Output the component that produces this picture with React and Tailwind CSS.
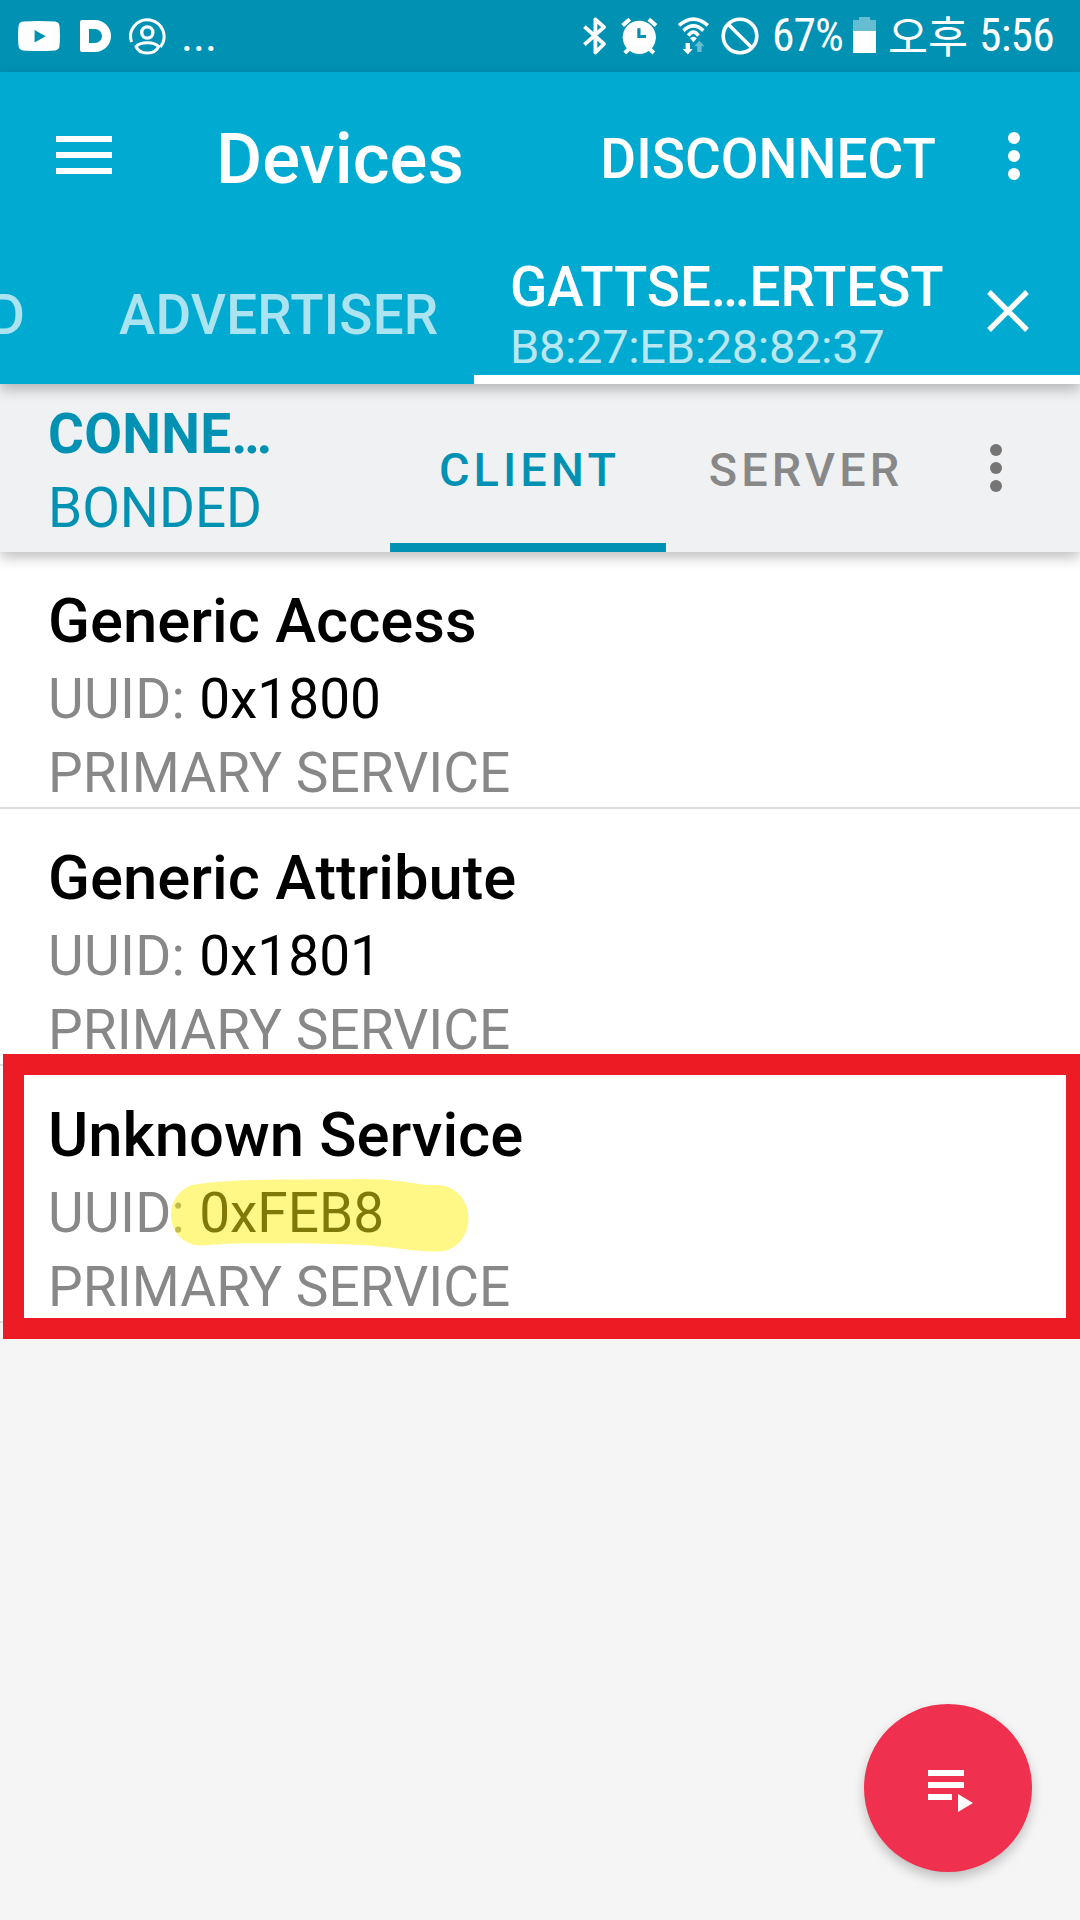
const services = [
  { name: "Generic Access", uuid: "0x1800" },
  { name: "Generic Attribute", uuid: "0x1801" },
  { name: "Unknown Service", uuid: "0xFEB8", marked: true },
];

function StatusBar() {
  return (
    <div className="flex h-[72px] items-center bg-[#0091b3] text-white">
      <svg className="ml-[18px] h-[30px] w-[42px]" viewBox="0 0 42 30" fill="currentColor">
        <path fillRule="evenodd" d="M5 .6Q21-.4 37 .6Q41 1 41.5 5Q42.4 15 41.5 25Q41 29 37 29.4Q21 30.4 5 29.4Q1 29 .5 25Q-.4 15 .5 5Q1 1 5 .6ZM16.6 9V21.4L27.7 15.2Z" />
      </svg>
      <div className="ml-5 h-8 w-[31px] rounded-l-[2px] rounded-r-[16px] border-9 border-white" />
      <svg className="ml-[18px] h-[37px] w-[37px]" viewBox="129 16.5 37 37" fill="none" stroke="currentColor" strokeWidth="3">
        <path d="M131.6 40.6A16.7 16.7 0 1 1 160.2 45.5" />
        <circle cx="147.3" cy="31" r="5.6" strokeWidth="3.4" />
        <path d="M136 45.2C140 39.8 154.500 39.8 158.6 45.2C156.500 50 151.500 51.600 147.300 51.600C143 51.600 138 50 136 45.200Z" />
      </svg>
      <span className="ml-[15px] text-[45.500px]/[72px]">...</span>

      <svg className="ml-auto h-[42px] w-[26px]" viewBox="582 14 26 42" fill="none" stroke="currentColor" strokeWidth="3.8">
        <path d="M584.400 25.600L604 43L595.400 51.500V18.500L604 26.200L584.400 43.700" strokeLinejoin="round" />
      </svg>
      <svg className="ml-[12px] h-[42px] w-[38px]" viewBox="620 14 38 42" fill="none" stroke="currentColor" strokeWidth="4">
        <circle cx="639.3" cy="36.300" r="16.600" fill="currentColor" stroke="none" />
        <path d="M622.600 24.600L629.800 18.300M648.800 18.300L656 24.600M624.800 52L630 46.800M653.800 52L648.600 46.800" />
        <path d="M638.900 27.200V35.500H646" stroke="#0091b3" strokeWidth="3.200" />
      </svg>
      <svg className="ml-[19px] h-[42px] w-[33px]" viewBox="677 14 33 42" fill="none" stroke="currentColor" strokeWidth="3.6">
        <path d="M679 24.400Q693.400 11.800 707.800 24.400M683.500 29.600Q693.400 20.300 703.300 29.600M688.300 34.600Q693.400 27.500 698.500 34.600" />
        <g fill="currentColor" stroke="none">
          <path d="M690 37.300Q693.400 34 696.800 37.300L693.400 41.200Z" />
          <path d="M685.600 42H690V48H692.800L687.800 53.400L682.600 48H685.600Z" />
          <path d="M697.200 51V45.300H694.200L699.300 39.800L704.600 45.300H701.600V51Z" opacity=".4" />
        </g>
      </svg>
      <svg className="ml-[11px] h-[38px] w-[38px]" viewBox="721 16 38 38" fill="none" stroke="currentColor" strokeWidth="3.6">
        <circle cx="740" cy="35" r="16.800" />
        <path d="M728.200 23.200L751.800 46.800" />
      </svg>
      <span className="ml-[13px] w-[81px] text-[45.500px]/[72px] font-normal tracking-[-1px] whitespace-nowrap [font-stretch:75%]">67%</span>
      <svg className="-mt-[2px] h-9 w-[23px]" viewBox="0 0 23 36" fill="currentColor">
        <path d="M6 0H17V3H23V14H0V3H6Z" opacity=".4" />
        <path d="M0 14H23V36H0Z" />
      </svg>
      <span className="-mt-[3px] ml-[12px] w-[91px] font-['Noto_Sans_CJK_KR',sans-serif] text-[43.500px]/[69px] whitespace-nowrap">오후</span>
      <span className="mr-[20px] w-[81px] text-[45.500px]/[72px] tracking-[-0.800px] whitespace-nowrap [font-stretch:75%]">5:56</span>
    </div>
  );
}

function MoreDots({ className }) {
  return (
    <svg className={className} viewBox="0 0 12 48" fill="currentColor">
      <circle cx="6" cy="6" r="6" />
      <circle cx="6" cy="24" r="6" />
      <circle cx="6" cy="42" r="6" />
    </svg>
  );
}

function AppBar() {
  return (
    <header className="relative z-20 h-[312px] bg-[#00aad0] text-white shadow-[0_6px_12px_rgba(0,0,0,0.24)]">
      <div className="flex h-[168px] items-center pb-[2px]">
        <div className="ml-14 flex w-14 flex-col gap-[10px]">
          <span className="h-[6px] bg-white" />
          <span className="h-[6px] bg-white" />
          <span className="h-[6px] bg-white" />
        </div>
        <h1 className="ml-[104px] pt-[7px] text-[70.700px]/[84px] font-medium">Devices</h1>
        <span className="mr-[72px] ml-auto pt-[8px] text-[54.900px]/[84px] font-medium">DISCONNECT</span>
        <MoreDots className="mt-[2px] mr-[60px] h-12 w-3" />
      </div>
      <nav className="flex h-[144px]">
        <div className="flex w-[474px] items-center overflow-hidden pt-[6px] text-[54.700px]/[72px] font-medium text-white/67">
          <span className="flex w-[25px] justify-end">D</span>
          <span className="ml-[94px] tracking-[0.200px]">ADVERTISER</span>
        </div>
        <div className="flex w-[606px] items-center border-b-9 border-white">
          <div className="ml-[36px] h-full w-[441px] pt-[17px] whitespace-nowrap">
            <p className="text-[54.700px]/[60px] font-medium">GATTSE…ERTEST</p>
            <p className="text-[47px]/[60px] tracking-[-0.330px] text-white/72">B8:27:EB:28:82:37</p>
          </div>
          <svg className="mt-[6px] ml-[36px] h-[42px] w-[42px]" viewBox="0 0 42 42" stroke="currentColor" strokeWidth="5.400">
            <path d="M2 2L40 40M40 2L2 40" />
          </svg>
        </div>
      </nav>
    </header>
  );
}

function DeviceBar() {
  return (
    <section className="relative z-10 flex h-[168px] bg-[#eff1f3] text-[#0091b3] shadow-[0_6px_12px_rgba(0,0,0,0.24)]">
      <div className="w-[390px] pt-[13px] pl-12 text-[54.800px]/[74px]">
        <p className="font-bold tracking-[0.300px]">CONNE…</p>
        <p>BONDED</p>
      </div>
      <div className="flex w-[276px] items-center justify-center border-b-9 border-[#0091b3] pt-[13px] pl-[3px] text-[46.800px]/[60px] font-medium tracking-[4.100px]">
        CLIENT
      </div>
      <div className="flex w-[277px] items-center justify-center border-b-9 border-transparent pt-[13px] pl-[3px] text-[46.800px]/[60px] font-medium tracking-[4.100px] text-[#888]">
        SERVER
      </div>
      <MoreDots className="mt-[60px] ml-[47px] h-12 w-3 text-[#757575]" />
    </section>
  );
}

function ServiceRow({ name, uuid, marked }) {
  return (
    <li className="relative h-[257px] border-b-2 border-[#ddd] bg-white pt-7 pl-12 text-[55px]/[74px] text-[#888]">
      <h2 className="text-[61.600px]/[82px] font-medium text-black">{name}</h2>
      <p>
        <span className="tracking-[0.300px]">UUID: </span>
        <span className="text-black">{uuid}</span>
      </p>
      <p className="h-[69px] tracking-[0.060px]">PRIMARY SERVICE</p>
      {marked && (
        <>
          <svg className="absolute top-[112px] left-[170px] h-[75px] w-[300px]" viewBox="170 1178 300 75">
            <path
              d="M171 1215C171 1199 182 1187 195 1184.500C238 1178 300 1180 360 1179C390 1179 405 1182 427 1185H437C455 1185 468.500 1200 468.500 1218C468.500 1237 455 1251.500 439 1251.500C420 1252 400 1248 370 1245.500C330 1243 270 1243 232 1243.500L202 1245.500C184 1246 171 1232 171 1215Z"
              fill="#fff10f"
              opacity=".5"
            />
          </svg>
          <div className="absolute -top-3 right-0 left-[3px] h-[285px] border-21 border-r-14 border-[#ed1c24]" />
        </>
      )}
    </li>
  );
}

export default function App() {
  return (
    <div className="relative h-[1920px] w-[1080px] overflow-hidden bg-[#f5f5f5] font-[Roboto,sans-serif]">
      <StatusBar />
      <AppBar />
      <DeviceBar />
      <ul>
        {services.map((service) => (
          <ServiceRow key={service.name} {...service} />
        ))}
      </ul>
      <button className="absolute right-12 bottom-12 flex h-[168px] w-[168px] items-center justify-center rounded-full bg-[#ef304f] text-white shadow-[0_6px_12px_rgba(0,0,0,0.22)]">
        <svg className="mt-[6px] ml-[5px] h-[42px] w-[45px]" viewBox="0 0 45 42" fill="currentColor">
          <path d="M0 0H36V6H0ZM0 12H36V18H0ZM0 24H24V30H0ZM30 24L45 33L30 42Z" />
        </svg>
      </button>
    </div>
  );
}
